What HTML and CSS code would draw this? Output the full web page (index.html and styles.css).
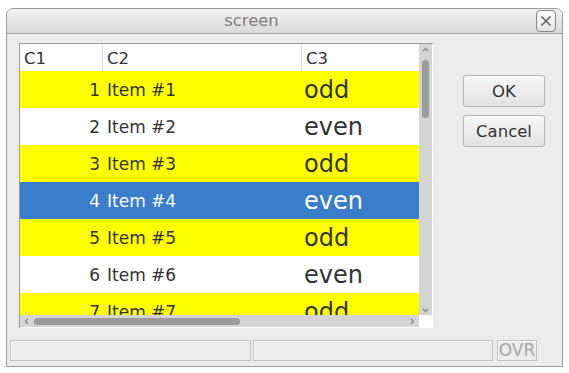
FILE: index.html
```html
<!DOCTYPE html>
<html lang="en">
<head>
    <meta charset="UTF-8">
    <title>screen</title>
    <link rel="stylesheet" href="styles.css">
</head>
<body>
    <div class="window">
        <div class="titlebar">
            <span class="title">screen</span>
            <span class="close-btn">
                <svg width="12" height="12" viewBox="0 0 12 12"><path d="M1.5 1.5 L10.5 10.5 M10.5 1.5 L1.5 10.5" stroke="#666" stroke-width="1.6" fill="none"/></svg>
            </span>
        </div>

        <div class="content">
            <div class="table-box">
                <div class="viewport">
                    <div class="row header">
                        <div class="head h1">C1</div>
                        <div class="head h2">C2</div>
                        <div class="head h3">C3</div>
                    </div>
                    <div class="row odd">
                        <div class="cell c1">1</div>
                        <div class="cell c2">Item #1</div>
                        <div class="cell c3">odd</div>
                    </div>
                    <div class="row even">
                        <div class="cell c1">2</div>
                        <div class="cell c2">Item #2</div>
                        <div class="cell c3">even</div>
                    </div>
                    <div class="row odd">
                        <div class="cell c1">3</div>
                        <div class="cell c2">Item #3</div>
                        <div class="cell c3">odd</div>
                    </div>
                    <div class="row selected">
                        <div class="cell c1">4</div>
                        <div class="cell c2">Item #4</div>
                        <div class="cell c3">even</div>
                    </div>
                    <div class="row odd">
                        <div class="cell c1">5</div>
                        <div class="cell c2">Item #5</div>
                        <div class="cell c3">odd</div>
                    </div>
                    <div class="row even">
                        <div class="cell c1">6</div>
                        <div class="cell c2">Item #6</div>
                        <div class="cell c3">even</div>
                    </div>
                    <div class="row odd">
                        <div class="cell c1">7</div>
                        <div class="cell c2">Item #7</div>
                        <div class="cell c3">odd</div>
                    </div>
                </div>

                <div class="vscroll">
                    <svg class="arrow" width="7" height="5" viewBox="0 0 7 5"><path d="M1 4 L3.5 1.5 L6 4" stroke="#8a8a8a" stroke-width="1.4" fill="none"/></svg>
                    <div class="vthumb"></div>
                    <div class="spacer"></div>
                    <svg class="arrow" width="7" height="5" viewBox="0 0 7 5"><path d="M1 1 L3.5 3.5 L6 1" stroke="#8a8a8a" stroke-width="1.4" fill="none"/></svg>
                </div>

                <div class="hscroll">
                    <svg class="arrow" width="5" height="7" viewBox="0 0 5 7"><path d="M4 1 L1.5 3.5 L4 6" stroke="#8a8a8a" stroke-width="1.4" fill="none"/></svg>
                    <div class="hthumb"></div>
                    <div class="spacer"></div>
                    <svg class="arrow" width="5" height="7" viewBox="0 0 5 7"><path d="M1 1 L3.5 3.5 L1 6" stroke="#8a8a8a" stroke-width="1.4" fill="none"/></svg>
                </div>

                <div class="corner"></div>
            </div>

            <div class="buttons">
                <button class="btn">OK</button>
                <button class="btn">Cancel</button>
            </div>
        </div>

        <div class="statusbar">
            <div class="field field-1"></div>
            <div class="field field-2"></div>
            <div class="field field-ovr">OVR</div>
        </div>
    </div>
</body>
</html>
```

FILE: styles.css
```css
body, html {
    margin: 0;
    padding: 0;
    background: #fff;
    font-family: 'DejaVu Sans', sans-serif;
    color: #333;
}

.window {
    box-sizing: border-box;
    width: 557px;
    margin: 8px 0 0 6px;
    border: 1px solid #9c9c9c;
    border-radius: 7px 7px 0 0;
    background: #ececec;
    padding-bottom: 5px;
}

.titlebar {
    height: 24px;
    border-bottom: 1px solid #a8a8a8;
    border-radius: 6px 6px 0 0;
    background: linear-gradient(#f4f4f4, #d9d9d9);
    display: flex;
    align-items: flex-start;
}

.title {
    flex: 1;
    text-align: center;
    padding-right: 40px;
    font-size: 16.4px;
    line-height: 24px;
    color: #7e7e7e;
}

.close-btn {
    box-sizing: border-box;
    width: 20px;
    height: 22px;
    margin: 1px 6px 0 0;
    border: 1px solid #8a8a8a;
    border-radius: 4px;
    background: linear-gradient(#fafafa, #e6e6e6);
    display: flex;
    align-items: center;
    justify-content: center;
}

.content {
    display: flex;
    padding: 9px 0 0 12px;
}

.table-box {
    display: grid;
    grid-template-columns: 399px 14px;
    grid-template-rows: 271px 13px;
    border-left: 1px solid #9a9a9a;
    border-top: 1px solid #9a9a9a;
    background: #fff;
}

.viewport {
    overflow: hidden;
}

.row {
    display: grid;
    grid-template-columns: 82px 199px 118px;
    height: 37px;
    align-items: center;
    font-size: 17px;
}

.row.header {
    height: 27px;
    align-items: stretch;
    background: #fff;
}

.head {
    padding: 2px 0 0 4px;
    line-height: 25px;
    font-size: 16.5px;
}

.head.h2,
.head.h3 {
    border-left: 1px solid #dcdcdc;
    padding-left: 4px;
}

.cell.c1 {
    text-align: right;
    padding-right: 2px;
}

.cell.c2 {
    padding-left: 5px;
}

.cell.c3 {
    padding-left: 3px;
    font-size: 24px;
}

.row.odd {
    background: #ffff00;
}

.row.even {
    background: #fff;
}

.row.selected {
    background: #3a7ecb;
    color: #fff;
}

.vscroll {
    width: 13px;
    background: #d4d4d4;
    display: flex;
    flex-direction: column;
    align-items: center;
    padding: 3px 0 2px;
    box-sizing: border-box;
}

.vthumb {
    width: 7px;
    height: 58px;
    margin-top: 8px;
    border-radius: 4px;
    background: #9b9b9b;
}

.hscroll {
    height: 12px;
    background: #d4d4d4;
    display: flex;
    align-items: center;
    padding: 0 4px;
}

.hthumb {
    width: 206px;
    height: 7px;
    margin-left: 5px;
    border-radius: 4px;
    background: #9b9b9b;
}

.spacer {
    flex: 1;
}

.arrow {
    display: block;
}

.corner {
    background: #fff;
}

.buttons {
    display: flex;
    flex-direction: column;
    gap: 8px;
    margin: 32px 0 0 30px;
}

.btn {
    width: 82px;
    height: 32px;
    border: 1px solid #b4b4b4;
    border-radius: 3px;
    background: linear-gradient(#f8f8f8, #e2e2e2);
    font-family: 'DejaVu Sans', sans-serif;
    font-size: 16.5px;
    color: #333;
    padding: 0;
}

.statusbar {
    display: flex;
    margin: 12px 0 0 3px;
}

.field {
    box-sizing: border-box;
    height: 21px;
    border: 1px solid #c2c2c2;
    box-shadow: inset 1px 1px #f8f8f8;
}

.field-1 {
    width: 241px;
    margin-right: 2px;
}

.field-2 {
    width: 240px;
    margin-right: 4px;
}

.field-ovr {
    width: 40px;
    font-size: 17px;
    line-height: 19px;
    color: #a8a8a8;
    text-align: center;
}
```
